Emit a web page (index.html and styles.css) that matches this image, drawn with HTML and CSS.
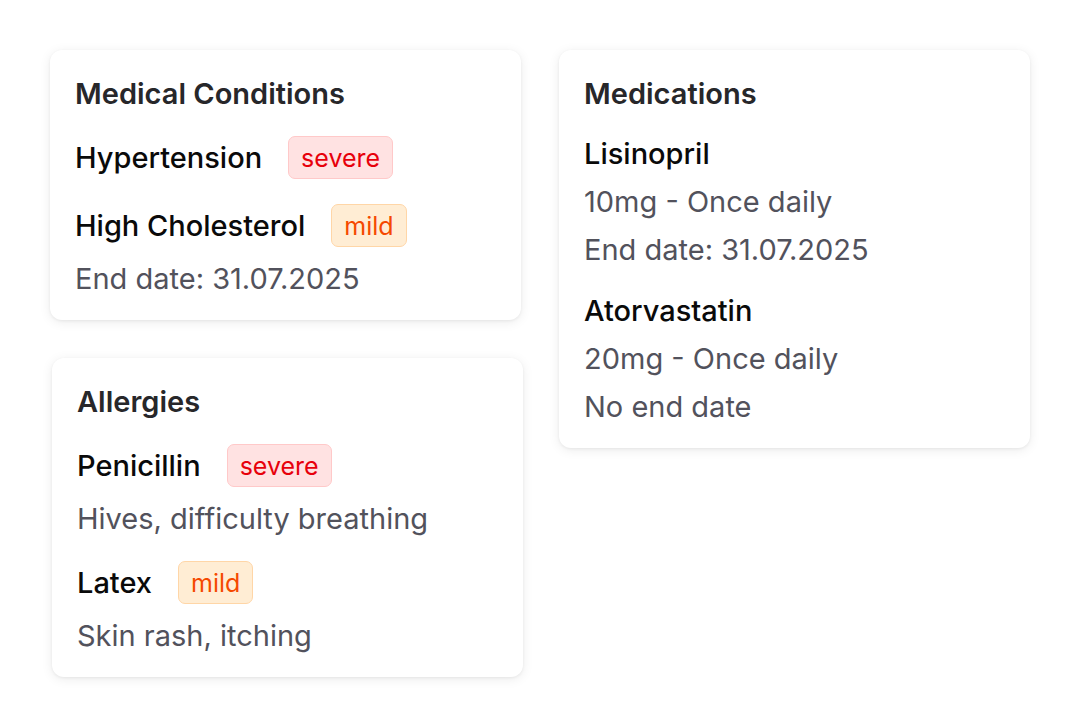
FILE: index.html
```html
<!DOCTYPE html>
<html lang="en">
<head>
<meta charset="utf-8">
<title>Health summary</title>
<link rel="stylesheet" href="styles.css">
</head>
<body>
<main class="board">
  <div class="column">
    <section class="card">
      <h2 class="card-title">Medical Conditions</h2>
      <div class="items">
        <div class="item">
          <div class="item-head">
            <span class="item-name">Hypertension</span>
            <span class="badge badge-severe">severe</span>
          </div>
        </div>
        <div class="item">
          <div class="item-head">
            <span class="item-name">High Cholesterol</span>
            <span class="badge badge-mild">mild</span>
          </div>
          <p class="item-note">End date: 31.07.2025</p>
        </div>
      </div>
    </section>
    <section class="card card-shift">
      <h2 class="card-title">Allergies</h2>
      <div class="items">
        <div class="item">
          <div class="item-head">
            <span class="item-name">Penicillin</span>
            <span class="badge badge-severe">severe</span>
          </div>
          <p class="item-note">Hives, difficulty breathing</p>
        </div>
        <div class="item">
          <div class="item-head">
            <span class="item-name">Latex</span>
            <span class="badge badge-mild">mild</span>
          </div>
          <p class="item-note">Skin rash, itching</p>
        </div>
      </div>
    </section>
  </div>
  <div class="column">
    <section class="card">
      <h2 class="card-title">Medications</h2>
      <div class="items items-meds">
        <div class="item item-med">
          <span class="item-name">Lisinopril</span>
          <p class="item-note">10mg - Once daily</p>
          <p class="item-note">End date: 31.07.2025</p>
        </div>
        <div class="item item-med">
          <span class="item-name">Atorvastatin</span>
          <p class="item-note">20mg - Once daily</p>
          <p class="item-note">No end date</p>
        </div>
      </div>
    </section>
  </div>
</main>
</body>
</html>
```

FILE: styles.css
```css
* { box-sizing: border-box; }

html, body {
  margin: 0;
  padding: 0;
  background: #ffffff;
}

body {
  font-family: Inter, "Noto Sans", "Liberation Sans", sans-serif;
  color: #0a0a0a;
}

.board {
  display: grid;
  grid-template-columns: 471px 471px;
  column-gap: 38px;
  align-items: start;
  padding: 50px;
}

.column {
  display: flex;
  flex-direction: column;
  gap: 38px;
}

.card {
  background: #ffffff;
  border-radius: 12px;
  box-shadow: 0 2px 12px rgba(0, 0, 0, 0.08), 0 1px 3px rgba(0, 0, 0, 0.06);
  padding: 26px 24px 24px 25px;
}

.card-shift {
  margin: 0 -2px 0 2px;
}

.card-title {
  margin: 0 0 24px;
  font-size: 29px;
  line-height: 36px;
  font-weight: 600;
  color: #27272a;
}

.items {
  display: flex;
  flex-direction: column;
  gap: 25px;
}

.items-meds {
  gap: 26px;
}

.item {
  display: flex;
  flex-direction: column;
  gap: 14px;
}

.item-med {
  gap: 13px;
}

.item-head {
  display: flex;
  align-items: center;
  gap: 26px;
}

.item-name {
  font-size: 29px;
  line-height: 35px;
  font-weight: 500;
  color: #0a0a0a;
}

.item-note {
  margin: 0;
  font-size: 29px;
  line-height: 35px;
  font-weight: 400;
  color: #52525c;
}

.badge {
  display: inline-flex;
  align-items: center;
  height: 43px;
  padding: 0 12px;
  border-radius: 7px;
  border: 1.5px solid;
  font-size: 25px;
  font-weight: 400;
}

.badge-severe {
  background: #ffe2e2;
  border-color: #ffc9c9;
  color: #e7000b;
}

.badge-mild {
  background: #ffedd4;
  border-color: #ffd6a7;
  color: #f54900;
}
```
